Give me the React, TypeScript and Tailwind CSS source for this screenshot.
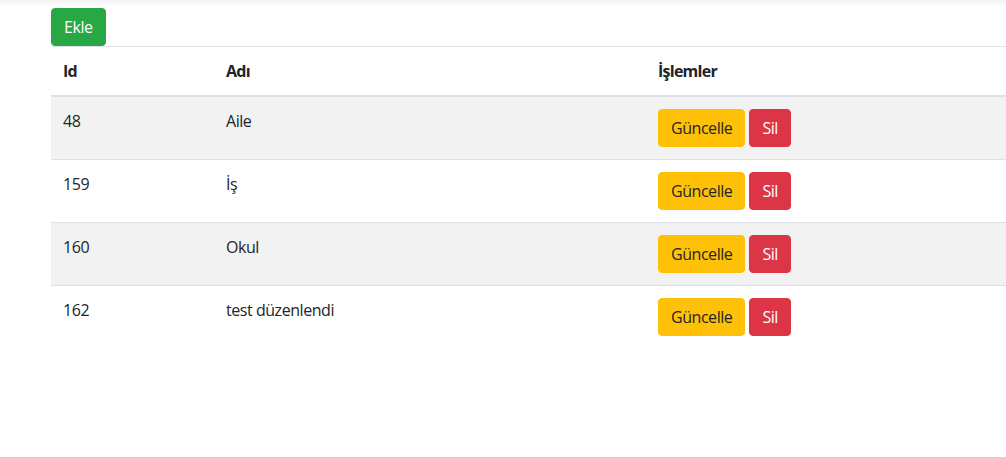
import React from 'react';

const rows = [
  { id: 48, name: 'Aile' },
  { id: 159, name: 'İş' },
  { id: 160, name: 'Okul' },
  { id: 162, name: 'test düzenlendi' },
];

const font = { fontFamily: '"Open Sans", "Noto Sans", sans-serif' };

export default function App() {
  return (
    <div className="min-h-screen bg-white text-[16px] leading-6 tracking-[-0.45px] text-[#212529]" style={font}>
      <div className="h-[6px] bg-gradient-to-b from-[#f3f3f3] to-[#fbfbfb]" />
      <div className="pl-[51px] pt-[2px]">
        <button className="h-[38px] px-3 rounded bg-[#28a745] border border-[#28a745] text-white">Ekle</button>
        <table className="w-[955px] border-collapse text-left">
          <thead>
            <tr className="border-t border-[#dee2e6] border-b-2 tracking-[-0.75px]">
              <th className="w-[163px] px-3 py-3 font-bold">Id</th>
              <th className="w-[432px] px-3 py-3 font-bold">Adı</th>
              <th className="px-3 py-3 font-bold">İşlemler</th>
            </tr>
          </thead>
          <tbody>
            {rows.map((r, i) => (
              <tr key={r.id} className={`border-t border-[#dee2e6] ${i % 2 === 0 ? 'bg-[#f2f2f2]' : 'bg-white'}`}>
                <td className="px-3 py-3 align-top">{r.id}</td>
                <td className="px-3 py-3 align-top">{r.name}</td>
                <td className="px-3 py-3 align-top">
                  <div className="flex gap-1">
                    <button className="h-[38px] px-3 rounded bg-[#ffc107] border border-[#ffc107] text-[#212529]">Güncelle</button>
                    <button className="h-[38px] px-3 rounded bg-[#dc3545] border border-[#dc3545] text-white">Sil</button>
                  </div>
                </td>
              </tr>
            ))}
          </tbody>
        </table>
      </div>
    </div>
  );
}
